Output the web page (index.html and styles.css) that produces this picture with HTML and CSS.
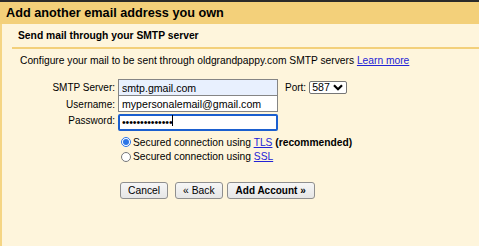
FILE: index.html
```html
<!DOCTYPE html>
<html>
<head>
<meta charset="utf-8">
<link rel="stylesheet" href="styles.css">
</head>
<body>
<div class="topbar"></div>
<div class="title">Add another email address you own</div>
<div class="panel">
  <div class="subtitle">Send mail through your SMTP server</div>
  <div class="rule"></div>
  <p class="intro">Configure your mail to be sent through oldgrandpappy.com SMTP servers <a href="#" class="link">Learn more</a></p>
  <div class="form">
    <label class="lbl">SMTP Server:</label>
    <div class="field">
      <input class="inp inp-autofill" value="smtp.gmail.com">
      <span class="port">Port:</span>
      <span class="select">587<svg class="chev" width="10" height="7" viewBox="0 0 10 7"><path d="M1 1.2 L5 5.2 L9 1.2" fill="none" stroke="#000" stroke-width="2.2"/></svg></span>
    </div>
    <label class="lbl">Username:</label>
    <div class="field"><input class="inp inp-user" value="mypersonalemail@gmail.com"></div>
    <label class="lbl">Password:</label>
    <div class="field"><span class="pw-wrap"><input type="password" class="inp inp-focus" value="abcdefghijklmn"><span class="caret"></span></span></div>
  </div>
  <div class="radios">
    <label class="radio-row"><input type="radio" name="sec" class="radio" checked><span>Secured connection using <a href="#" class="link">TLS</a> <b>(recommended)</b></span></label>
    <label class="radio-row"><input type="radio" name="sec" class="radio"><span>Secured connection using <a href="#" class="link">SSL</a></span></label>
  </div>
  <div class="buttons">
    <button class="btn">Cancel</button>
    <button class="btn btn-back">« Back</button>
    <button class="btn btn-bold">Add Account »</button>
  </div>
</div>
</body>
</html>
```
FILE: styles.css
```css
html, body {
  margin: 0;
  padding: 0;
  background: #fef5dc;
  font-family: "Liberation Sans", Arial, sans-serif;
  color: #000;
}
.topbar {
  height: 2px;
  background: #2a2a2a;
}
.title {
  height: 22px;
  background: #f3d07a;
  padding-left: 6px;
  font-weight: bold;
  font-size: 12.7px;
  line-height: 23px;
}
.panel {
  border-left: 2px solid #f5d584;
  min-height: 222px;
  box-sizing: border-box;
}
.subtitle {
  height: 23px;
  padding-left: 16px;
  font-weight: bold;
  font-size: 10.3px;
  line-height: 23px;
}
.rule {
  margin-left: 10px;
  height: 2px;
  background: #f3d07a;
}
.intro {
  margin: 0;
  padding: 6px 0 0 18px;
  font-size: 10.25px;
  line-height: 12px;
}
.link {
  color: #2323d6;
  text-decoration: underline;
}
.form {
  display: grid;
  grid-template-columns: 113px auto;
  grid-template-rows: 17px 16px 17px;
  column-gap: 3px;
  margin-top: 12px;
}
.lbl {
  font-size: 10px;
  text-align: right;
  align-self: center;
}
.field {
  display: flex;
  align-items: flex-start;
}
.inp {
  box-sizing: border-box;
  width: 160px;
  height: 17px;
  margin: 0;
  padding: 0 3px;
  border: 1px solid #858585;
  border-radius: 0;
  background: #fff;
  font-family: "Liberation Sans", Arial, sans-serif;
  font-size: 10.6px;
  color: #000;
  outline: none;
}
.inp-autofill {
  background: #e8f0fe;
}
.inp-user {
  margin-top: -1px;
}
.inp-focus {
  border: 2px solid #1b5fcf;
  border-radius: 2px;
  padding: 0 2px;
  font-size: 10.6px;
  letter-spacing: -0.1px;
}
.pw-wrap {
  position: relative;
  display: inline-block;
}
.caret {
  position: absolute;
  left: 54px;
  top: 3px;
  width: 1px;
  height: 11px;
  background: #000;
}
.port {
  font-size: 10px;
  margin-left: 7px;
  margin-top: 3px;
}
.select {
  display: inline-flex;
  align-items: center;
  box-sizing: border-box;
  height: 13px;
  margin-left: 3px;
  margin-top: 2px;
  padding: 0 3px 0 2px;
  border: 1px solid #767676;
  border-radius: 2px;
  background: #fff;
  font-size: 10.6px;
  line-height: 11px;
}
.chev {
  margin-left: 3px;
}
.radios {
  margin-top: 6px;
  margin-left: 119px;
  display: flex;
  flex-direction: column;
}
.radio-row {
  display: flex;
  align-items: center;
  height: 14.5px;
  font-size: 10.25px;
}
.radio {
  width: 10px;
  height: 10px;
  margin: 0 2px 0 0;
  accent-color: #2a74e6;
}
.buttons {
  display: flex;
  margin-top: 18px;
  margin-left: 118px;
}
.btn {
  box-sizing: border-box;
  height: 17px;
  margin: 0;
  padding: 0 7px;
  border: 1px solid #8f8f8f;
  border-radius: 3px;
  background: linear-gradient(#f6f6f6, #e6e6e6);
  font-family: "Liberation Sans", Arial, sans-serif;
  font-size: 10.3px;
  color: #000;
}
.btn-back {
  margin-left: 7px;
}
.btn-bold {
  margin-left: 4px;
  font-weight: bold;
  font-size: 10px;
  padding: 0 8px;
}
```
